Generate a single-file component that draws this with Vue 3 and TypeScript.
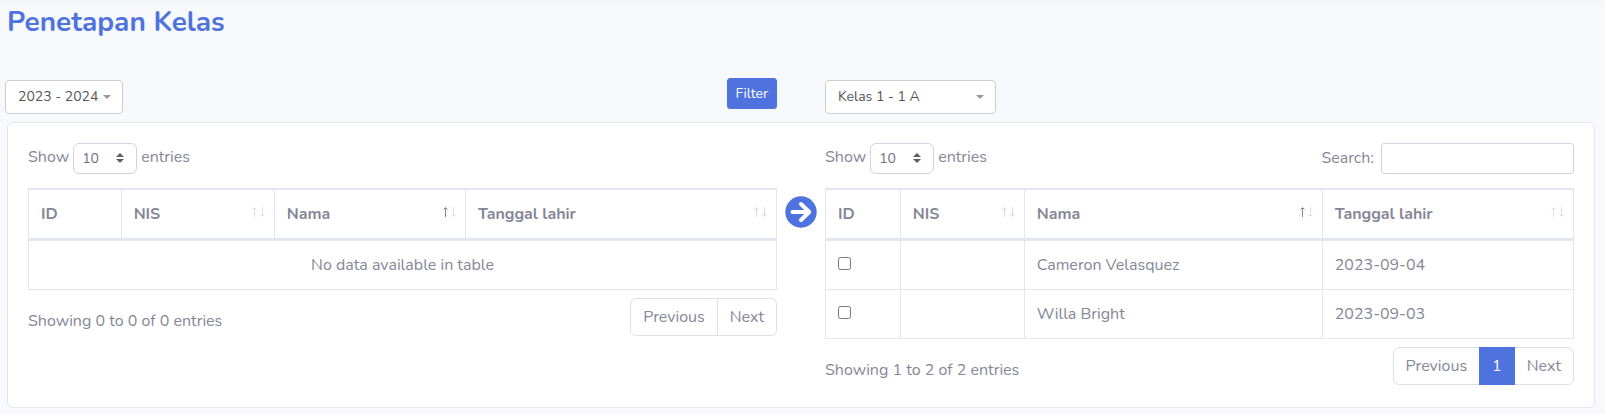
<script setup lang="ts">
import { ref } from 'vue'

type SortState = 'none' | 'idle' | 'asc'

interface Column {
  label: string
  sort: SortState
  width: string
}

interface Student {
  id: number
  nis: string
  name: string
  birthDate: string
}

interface Panel {
  key: string
  columns: Column[]
  rows: Student[]
  searchable: boolean
  info: string
  pages: number[]
}

const year = ref('2023 - 2024')
const kelas = ref('Kelas 1 - 1 A')
const query = ref('')
const selected = ref<number[]>([])

const panels: Panel[] = [
  {
    key: 'source',
    columns: [
      { label: 'ID', sort: 'none', width: '12.4%' },
      { label: 'NIS', sort: 'idle', width: '20.5%' },
      { label: 'Nama', sort: 'asc', width: '25.6%' },
      { label: 'Tanggal lahir', sort: 'idle', width: '41.5%' },
    ],
    rows: [],
    searchable: false,
    info: 'Showing 0 to 0 of 0 entries',
    pages: [],
  },
  {
    key: 'target',
    columns: [
      { label: 'ID', sort: 'none', width: '10%' },
      { label: 'NIS', sort: 'idle', width: '16.6%' },
      { label: 'Nama', sort: 'asc', width: '39.9%' },
      { label: 'Tanggal lahir', sort: 'idle', width: '33.5%' },
    ],
    rows: [
      { id: 1, nis: '', name: 'Cameron Velasquez', birthDate: '2023-09-04' },
      { id: 2, nis: '', name: 'Willa Bright', birthDate: '2023-09-03' },
    ],
    searchable: true,
    info: 'Showing 1 to 2 of 2 entries',
    pages: [1],
  },
]
</script>

<template>
  <main class="page">
    <h1 class="title">Penetapan Kelas</h1>

    <div class="columns filters">
      <div class="filter-left">
        <div class="picker picker-year">
          <select v-model="year" aria-label="Tahun ajaran">
            <option>2023 - 2024</option>
          </select>
          <svg class="caret" viewBox="0 0 8 4" aria-hidden="true"><path d="M0 0h8L4 4z" /></svg>
        </div>
        <button class="filter-button" type="button">Filter</button>
      </div>
      <div class="filter-right">
        <div class="picker picker-class">
          <select v-model="kelas" aria-label="Kelas">
            <option>Kelas 1 - 1 A</option>
          </select>
          <svg class="caret" viewBox="0 0 8 4" aria-hidden="true"><path d="M0 0h8L4 4z" /></svg>
        </div>
      </div>
    </div>

    <section class="card columns">
      <template v-for="(panel, index) in panels" :key="panel.key">
        <button v-if="index === 1" class="move" type="button" aria-label="Pindahkan">
          <svg viewBox="0 0 32 32" aria-hidden="true">
            <circle cx="16" cy="16" r="15.700" />
            <path d="M7.500 16H24M16 8l8.200 8L16 24" />
          </svg>
        </button>

        <div class="panel">
          <div class="controls">
            <label class="length">
              Show
              <span class="length-box">
                <select>
                  <option>10</option>
                </select>
                <svg viewBox="0 0 8 10" aria-hidden="true"><path d="M4 0l4 4H0zM0 6h8l-4 4z" /></svg>
              </span>
              entries
            </label>
            <label v-if="panel.searchable" class="search">
              Search:
              <input v-model="query" type="search" />
            </label>
          </div>

          <table>
            <colgroup>
              <col v-for="c in panel.columns" :key="c.label" :style="{ width: c.width }" />
            </colgroup>
            <thead>
              <tr>
                <th v-for="c in panel.columns" :key="c.label" scope="col">
                  <div class="head">
                    <span>{{ c.label }}</span>
                    <svg
                      v-if="c.sort !== 'none'"
                      class="sort"
                      :class="{ asc: c.sort === 'asc' }"
                      viewBox="0 0 13 10"
                      aria-hidden="true"
                    >
                      <path class="up" d="M2.500 10V1M0.500 2.500l2-2 2 2" />
                      <path class="down" d="M10.500 0v9M8.500 7.500l2 2 2-2" />
                    </svg>
                  </div>
                </th>
              </tr>
            </thead>
            <tbody>
              <tr v-for="row in panel.rows" :key="row.id">
                <td><input v-model="selected" type="checkbox" :value="row.id" :aria-label="row.name" /></td>
                <td>{{ row.nis }}</td>
                <td>{{ row.name }}</td>
                <td>{{ row.birthDate }}</td>
              </tr>
              <tr v-if="panel.rows.length === 0">
                <td class="empty" colspan="4">No data available in table</td>
              </tr>
            </tbody>
          </table>

          <div class="footer">
            <span class="info">{{ panel.info }}</span>
            <nav class="pages">
              <button type="button">Previous</button>
              <button v-for="p in panel.pages" :key="p" class="current" type="button">{{ p }}</button>
              <button type="button">Next</button>
            </nav>
          </div>
        </div>
      </template>
    </section>
  </main>
</template>

<style>
body {
  margin: 0;
  background: #f8f9fc;
}
</style>

<style scoped>
* {
  box-sizing: border-box;
}

.page {
  padding: 4px 10px 5px 7px;
  background: linear-gradient(#f4f5f9, #f8f9fc 10px);
  color: #858796;
  font: 400 16px/24px Nunito, Lato, sans-serif;
}

select,
input,
button {
  margin: 0;
  font: inherit;
  color: inherit;
}

.title {
  margin: 0 0 38px;
  color: #4e73df;
  font-size: 28px;
  font-weight: 700;
  line-height: 36px;
}

.columns {
  display: grid;
  grid-template-columns: minmax(0, 1fr) 32px minmax(0, 1fr);
  column-gap: 8px;
}

.filters {
  padding: 0 21px;
  margin-bottom: 8px;
}

.filter-left {
  display: flex;
  justify-content: space-between;
  align-items: flex-start;
  margin-left: -23px;
}

.filter-right {
  grid-column: 3;
}

.picker {
  position: relative;
  margin-top: 2px;
}

.picker-year {
  width: 118px;
}

.picker-class {
  width: 171px;
}

.picker select {
  display: block;
  width: 100%;
  height: 34px;
  padding: 0 24px 0 12px;
  appearance: none;
  background: #fff;
  border: 1px solid #ccc;
  border-radius: 4px;
  color: #555;
  font-size: 14px;
}

.caret {
  position: absolute;
  top: 15px;
  right: 12px;
  width: 8px;
  height: 4px;
  fill: #999;
  pointer-events: none;
}

.filter-button {
  height: 31px;
  padding: 0 8px;
  min-width: 50px;
  background: #4e73df;
  border: 1px solid #4e73df;
  border-radius: 3px;
  color: #fff;
  font-size: 14px;
}

.card {
  padding: 20px;
  background: #fff;
  border: 1px solid #e3e6f0;
  border-radius: 6px;
}

.move {
  width: 32px;
  height: 32px;
  margin-top: 53px;
  padding: 0;
  background: none;
  border: 0;
}

.move svg {
  display: block;
  fill: #4e73df;
}

.move path {
  fill: none;
  stroke: #fff;
  stroke-width: 4;
  stroke-linecap: round;
  stroke-linejoin: round;
}

.controls {
  display: flex;
  justify-content: space-between;
  margin-bottom: 14px;
}

.length {
  display: flex;
  gap: 4px;
  line-height: 28px;
}

.length-box {
  position: relative;
}

.length select {
  display: block;
  width: 64px;
  height: 31px;
  padding: 0 24px 0 8px;
  appearance: none;
  background: #fff;
  border: 1px solid #d1d3e2;
  border-radius: 6px;
  color: #6e707e;
  font-size: 14px;
}

.length svg {
  position: absolute;
  top: 10px;
  right: 13px;
  width: 8px;
  height: 10px;
  fill: #5a5c69;
  pointer-events: none;
}

.search {
  display: flex;
  gap: 7px;
  line-height: 30px;
}

.search input {
  width: 193px;
  height: 31px;
  padding: 4px 8px;
  background: #fff;
  border: 1px solid #d1d3e2;
  border-radius: 3px;
  font-size: 14px;
  outline: none;
}

table {
  width: 100%;
  table-layout: fixed;
  border: 1px solid #e3e6f0;
  border-collapse: separate;
  border-spacing: 0;
}

th,
td {
  height: 49px;
  padding: 12px;
  border-top: 1px solid #e3e6f0;
  border-right: 1px solid #e3e6f0;
  text-align: left;
}

th {
  height: 51px;
  padding-right: 9px;
  border-bottom: 2px solid #e3e6f0;
  font-weight: 700;
}

th:last-child,
td:last-child {
  border-right: 0;
}

.head {
  display: flex;
  justify-content: space-between;
}

.sort {
  width: 13px;
  height: 10px;
  margin-top: 5px;
  fill: none;
  stroke: #dcdde1;
}

.sort.asc .up {
  stroke: #858796;
}

.empty {
  text-align: center;
}

td input {
  display: block;
  width: 13px;
  height: 13px;
  margin-bottom: 3px;
}

.footer {
  display: flex;
  justify-content: space-between;
  align-items: flex-start;
  margin-top: 8px;
  padding-bottom: 2px;
}

.info {
  padding-top: 11px;
}

.pages {
  display: flex;
}

.pages button {
  height: 38px;
  margin-left: -1px;
  padding: 0 12px;
  background: #fff;
  border: 1px solid #dddfeb;
}

.pages button:first-child {
  border-radius: 6px 0 0 6px;
}

.pages button:last-child {
  border-radius: 0 6px 6px 0;
}

.pages .current {
  z-index: 1;
  background: #4e73df;
  border-color: #4e73df;
  color: #fff;
}
</style>
